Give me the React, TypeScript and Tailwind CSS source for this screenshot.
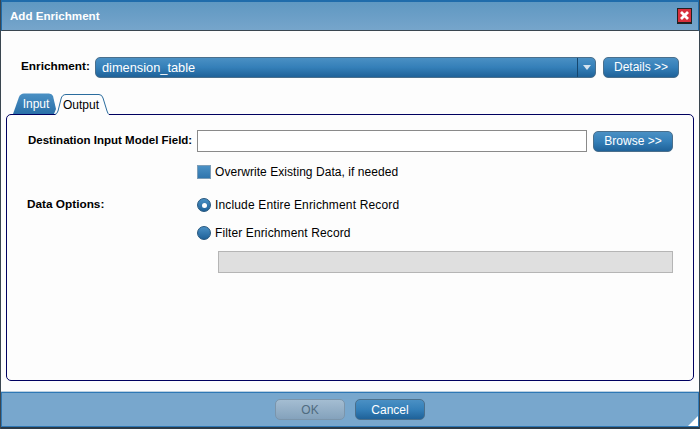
const font = { fontFamily: '"Liberation Sans", Arial, sans-serif' };

function BlueButton({ label, className }: { label: string; className: string }) {
  return (
    <button className={`flex items-center justify-center rounded-[5px] border border-[#4a6f8c] bg-gradient-to-b from-[#4a90c4] via-[#347fb8] to-[#1f6299] text-[12px] text-white ${className}`}>
      {label}
    </button>
  );
}

function TabShape({ input }: { input: boolean }) {
  if (input) {
    return (
      <svg className="absolute inset-0" width="44" height="21" viewBox="0 0 44 21">
        <defs>
          <linearGradient id="tabBlue" x1="0" y1="0" x2="0" y2="1">
            <stop offset="0" stopColor="#4a90c4" />
            <stop offset="1" stopColor="#2a70a8" />
          </linearGradient>
        </defs>
        <path d="M0 21 L6 4 Q7.5 0.5 11 0.5 H36 Q39 0.5 40 3 L43 16 L41 21 Z" fill="url(#tabBlue)" />
      </svg>
    );
  }
  return (
    <svg className="absolute inset-0" width="54" height="21" viewBox="0 0 54 21">
      <path d="M0 21 Q2 20 3 17 L6 5 Q7 0.5 11 0.5 H44 Q47 0.5 48 4 L52 17 Q53 20 54 20.5 V21 Z" fill="#fdfdfd" />
      <path d="M0 20.5 Q2 20 3 17 L6 5 Q7 0.5 11 0.5 H44 Q47 0.5 48 4 L52 17 Q53 20 54 20.5" fill="none" stroke="#2a6c9e" />
    </svg>
  );
}

export default function App() {
  return (
    <div className="flex h-[429px] w-[700px] flex-col overflow-hidden border-x border-[#3a4650] bg-white text-[12px] text-black" style={font}>
      <div className="flex h-[31px] shrink-0 items-center justify-between border-x border-t-2 border-b border-x-[#1f6cab] border-t-[#1f6cab] border-b-[#3a4650] bg-gradient-to-b from-[#5f98c2] to-[#76a5cb] pl-[8px] pr-[6px]">
        <span className="text-[11.6px] font-bold text-white">Add Enrichment</span>
        <div className="flex h-[16px] w-[15px] items-center justify-center border border-[#222] border-b-2 bg-[#d8303c]">
          <svg width="11" height="11" viewBox="0 0 11 11">
            <path d="M2 2 L9 9 M9 2 L2 9" stroke="#ffffff" strokeWidth="2.8" />
          </svg>
        </div>
      </div>

      <div className="flex min-h-0 flex-1 flex-col bg-[#fdfdfd] px-[5px]">
        <div className="mt-[25px] flex h-[22px] items-center pl-[15px]">
          <span className="w-[74px] whitespace-nowrap text-[11.8px] font-bold">Enrichment:</span>
          <div className="flex h-[21px] w-[501px] items-stretch rounded-[5px] border border-[#4a6f8c] bg-gradient-to-b from-[#4a90c4] via-[#347fb8] to-[#1f6299] text-white">
            <span className="flex-1 pl-[6px] text-[12.8px] leading-[19px]">dimension_table</span>
            <div className="flex w-[18px] items-center justify-center border-l border-[#15466e]">
              <svg width="8" height="5" viewBox="0 0 8 5">
                <path d="M0 0 H8 L4 5 Z" fill="#d5e3ee" />
              </svg>
            </div>
          </div>
          <BlueButton label="Details >>" className="ml-[7px] h-[21px] w-[76px]" />
        </div>

        <div className="mt-[15px] flex h-[21px] items-end pl-[7px]">
          <div className="relative flex h-[21px] w-[44px] items-center justify-center pl-[2px] text-white">
            <TabShape input />
            <span className="relative">Input</span>
          </div>
          <div className="relative z-10 -mb-px -ml-[2px] flex h-[21px] w-[54px] items-center justify-center pr-[2px]">
            <TabShape input={false} />
            <span className="relative">Output</span>
          </div>
        </div>

        <div className="flex h-[267px] flex-col rounded-[5px] border border-[#000060] px-[20px]">
          <div className="mt-[15px] flex h-[22px] items-center">
            <span className="w-[170px] whitespace-nowrap pl-[1px] text-[11.5px] font-bold">Destination Input Model Field:</span>
            <div className="h-[22px] w-[390px] border border-[#8a8a8a] bg-white"></div>
            <BlueButton label="Browse >>" className="ml-[6px] h-[21px] w-[80px]" />
          </div>

          <div className="mt-[13px] flex h-[14px] items-center pl-[170px]">
            <div className="h-[14px] w-[14px] border border-[#7d9db7] bg-gradient-to-b from-[#4a90c4] to-[#2f75ad]"></div>
            <span className="ml-[4px] tracking-[0.05px]">Overwrite Existing Data, if needed</span>
          </div>

          <div className="mt-[19px] flex h-[14px] items-center">
            <span className="w-[170px] text-[11.8px] font-bold">Data Options:</span>
            <div className="flex h-[14px] w-[14px] items-center justify-center rounded-full border border-[#24557c] bg-gradient-to-b from-[#4a90c4] to-[#1f6299]">
              <div className="h-[5px] w-[5px] rounded-full bg-white"></div>
            </div>
            <span className="ml-[4px] tracking-[0.15px]">Include Entire Enrichment Record</span>
          </div>

          <div className="mt-[14px] flex h-[14px] items-center pl-[170px]">
            <div className="h-[14px] w-[14px] rounded-full border border-[#24557c] bg-gradient-to-b from-[#4a90c4] to-[#1f6299]"></div>
            <span className="ml-[4px] tracking-[0.12px]">Filter Enrichment Record</span>
          </div>

          <div className="ml-[191px] mt-[11px] h-[22px] w-[455px] border border-[#b5b5b5] bg-[#dfdfdf]"></div>
        </div>
      </div>

      <div className="relative flex h-[38px] shrink-0 items-center justify-center gap-[10px] border-t border-b-2 border-t-[#bcd0e0] border-b-[#2b3a46] bg-[#78a7cd] shadow-[inset_0_1px_0_#2f78b5,inset_1px_0_0_#2f78b5,inset_-1px_0_0_#2f78b5,inset_0_-1px_0_#2f78b5]">
        <button className="flex h-[21px] w-[70px] items-center justify-center rounded-[5px] border border-[#7b95ab] bg-gradient-to-b from-[#a4bdd2] to-[#84a2bc] text-[12px] text-[#4f6b80]">
          OK
        </button>
        <BlueButton label="Cancel" className="h-[21px] w-[70px] border-[#1d4a6e]" />
        <svg className="absolute bottom-[1px] right-[1px]" width="10" height="10" viewBox="0 0 10 10">
          <path d="M10 0 V10 H0 Z" fill="#ffffff" />
        </svg>
      </div>
    </div>
  );
}
